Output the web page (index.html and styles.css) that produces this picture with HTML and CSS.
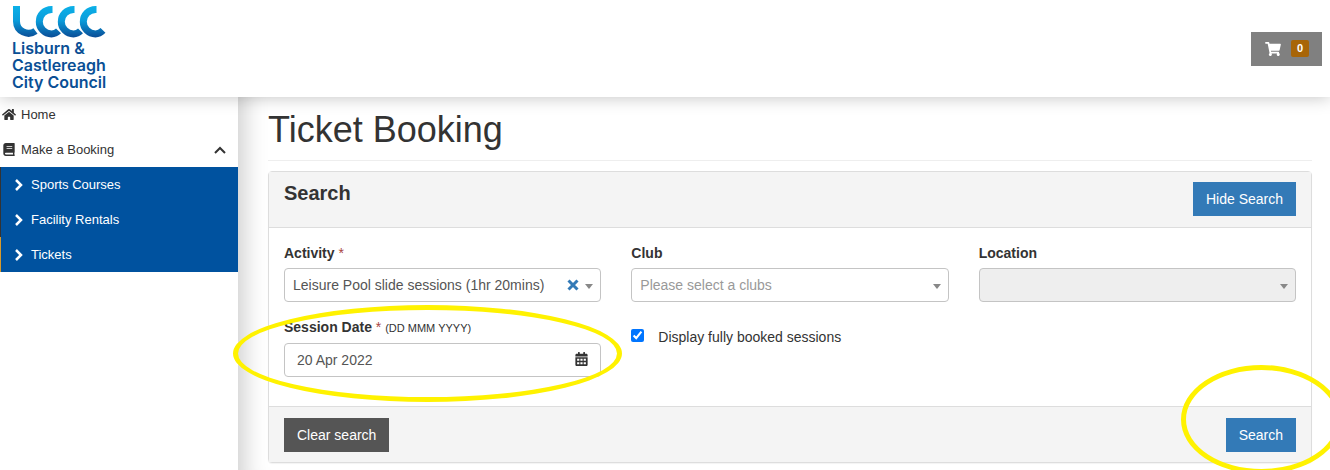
FILE: index.html
```html
<!DOCTYPE html>
<html lang="en">
<head>
    <meta charset="UTF-8">
    <meta name="viewport" content="width=device-width, initial-scale=1.0">
    <title>Ticket Booking</title>
    <link rel="stylesheet" href="styles.css">
</head>
<body>
    <header class="header">
        <a href="#" class="logo">
            <svg class="logo-mark" viewBox="0 0 94 32" aria-hidden="true">
                <defs>
                    <linearGradient id="logoBlue" gradientUnits="userSpaceOnUse" x1="0" y1="0" x2="0" y2="32">
                        <stop offset="0" stop-color="#0bb0e8"/>
                        <stop offset="0.45" stop-color="#0a9ddb"/>
                        <stop offset="1" stop-color="#0a4a94"/>
                    </linearGradient>
                </defs>
                <g fill="none" stroke="url(#logoBlue)" stroke-width="7">
                    <path d="M4.500 0v15.500a12 12 0 0 0 19 9.500"/>
                    <path d="M40.500 3.500h-1a12.200 12.200 0 0 0 0 24.400q4 0 7-3"/>
                    <path d="M62.500 3.500h-1a12.200 12.200 0 0 0 0 24.400q4 0 7-3"/>
                    <path d="M84.500 3.500h-1a12.200 12.200 0 0 0 0 24.400q4 0 7.500-3.500"/>
                </g>
            </svg>
            <span class="logo-text">Lisburn &amp;<br>Castlereagh<br>City Council</span>
        </a>
        <button type="button" class="cart" aria-label="Basket">
            <svg class="icon cart-icon" viewBox="0 0 576 512"><path d="M528.12 301.319l47.273-208C578.806 78.301 567.391 64 551.99 64H159.208l-9.166-44.81C147.758 8.021 137.93 0 126.529 0H24C10.745 0 0 10.745 0 24v16c0 13.255 10.745 24 24 24h69.883l70.248 343.435C147.325 417.1 136 435.222 136 456c0 30.928 25.072 56 56 56s56-25.072 56-56c0-15.674-6.447-29.835-16.824-40h209.647C430.447 426.165 424 440.326 424 456c0 30.928 25.072 56 56 56s56-25.072 56-56c0-22.172-12.888-41.332-31.579-50.405l5.517-24.276c3.413-15.018-8.002-29.319-23.403-29.319H218.117l-6.545-32h293.145c11.206 0 20.92-7.754 23.403-18.681z"/></svg>
            <span class="badge">0</span>
        </button>
    </header>

    <div class="page">
        <nav class="sidebar">
            <a href="#" class="nav-link">
                <svg class="icon nav-icon" viewBox="0 0 576 512"><path d="M280.37 148.26L96 300.11V464a16 16 0 0 0 16 16l112.06-.29a16 16 0 0 0 15.92-16V368a16 16 0 0 1 16-16h64a16 16 0 0 1 16 16v95.64a16 16 0 0 0 16 16.05L464 480a16 16 0 0 0 16-16V300L295.67 148.26a12.19 12.19 0 0 0-15.3 0zM571.6 251.47L488 182.56V44.05a12 12 0 0 0-12-12h-56a12 12 0 0 0-12 12v72.61L318.47 43a48 48 0 0 0-61 0L4.34 251.47a12 12 0 0 0-1.6 16.9l25.5 31A12 12 0 0 0 45.15 301l235.22-193.74a12.19 12.19 0 0 1 15.3 0L530.9 301a12 12 0 0 0 16.9-1.6l25.5-31a12 12 0 0 0-1.7-16.93z"/></svg>
                <span>Home</span>
            </a>
            <a href="#" class="nav-link">
                <svg class="icon nav-icon" viewBox="0 0 448 512"><path d="M448 360V24c0-13.3-10.7-24-24-24H96C43 0 0 43 0 96v320c0 53 43 96 96 96h328c13.3 0 24-10.7 24-24v-16c0-7.5-3.5-14.3-8.9-18.7-4.2-15.4-4.2-59.3 0-74.7 5.4-4.3 8.9-11.1 8.9-18.6zM128 134c0-3.3 2.7-6 6-6h212c3.3 0 6 2.7 6 6v20c0 3.3-2.7 6-6 6H134c-3.3 0-6-2.7-6-6v-20zm0 64c0-3.3 2.7-6 6-6h212c3.3 0 6 2.7 6 6v20c0 3.3-2.7 6-6 6H134c-3.3 0-6-2.7-6-6v-20zm253.4 250H96c-17.7 0-32-14.3-32-32 0-17.6 14.4-32 32-32h285.4c-1.9 17.1-1.9 46.9 0 64z"/></svg>
                <span>Make a Booking</span>
                <svg class="nav-toggle" viewBox="0 0 12 8"><path d="M1 7l5-5 5 5"/></svg>
            </a>
            <div class="subnav">
                <a href="#" class="subnav-link"><svg class="chevron" viewBox="0 0 8 12"><path d="M1 1l5 5-5 5"/></svg>Sports Courses</a>
                <a href="#" class="subnav-link"><svg class="chevron" viewBox="0 0 8 12"><path d="M1 1l5 5-5 5"/></svg>Facility Rentals</a>
                <a href="#" class="subnav-link active"><svg class="chevron" viewBox="0 0 8 12"><path d="M1 1l5 5-5 5"/></svg>Tickets</a>
            </div>
        </nav>

        <main class="content">
            <h1>Ticket Booking</h1>
            <form class="panel">
                <div class="panel-heading">
                    <h2>Search</h2>
                    <button type="button" class="btn btn-primary">Hide Search</button>
                </div>
                <div class="panel-body">
                    <div class="field">
                        <label for="activity">Activity <span class="required">*</span></label>
                        <div class="select-box">
                            <select id="activity">
                                <option>Leisure Pool slide sessions (1hr 20mins)</option>
                            </select>
                            <button type="button" class="clear" aria-label="Clear activity">
                                <svg viewBox="0 0 12 12"><path d="M1.500 1.500l9 9M10.500 1.500l-9 9"/></svg>
                            </button>
                        </div>
                    </div>
                    <div class="field">
                        <label for="club">Club</label>
                        <div class="select-box">
                            <select id="club" class="placeholder">
                                <option>Please select a clubs</option>
                            </select>
                        </div>
                    </div>
                    <div class="field">
                        <label for="location">Location</label>
                        <div class="select-box">
                            <select id="location" disabled></select>
                        </div>
                    </div>
                    <div class="field marked">
                        <label for="date">Session Date <span class="required">*</span> <small>(DD MMM YYYY)</small></label>
                        <div class="date-box">
                            <input type="text" id="date" value="20 Apr 2022">
                            <svg class="icon date-icon" viewBox="0 0 448 512"><path fill-rule="evenodd" d="M0 464c0 26.500 21.500 48 48 48h352c26.500 0 48-21.500 48-48V192H0zM64 244h80v76H64zM184 244h80v76h-80zM304 244h80v76h-80zM64 372h80v76H64zM184 372h80v76h-80zM304 372h80v76h-80zM400 64h-48V16c0-8.800-7.200-16-16-16h-32c-8.800 0-16 7.200-16 16v48H160V16c0-8.800-7.200-16-16-16h-32c-8.800 0-16 7.200-16 16v48H48C21.500 64 0 85.500 0 112v48h448v-48c0-26.500-21.500-48-48-48z"/></svg>
                        </div>
                        <span class="ring ring-date"></span>
                    </div>
                    <div class="check">
                        <input type="checkbox" id="booked" checked>
                        <label for="booked">Display fully booked sessions</label>
                    </div>
                </div>
                <div class="panel-footer">
                    <button type="reset" class="btn btn-dark">Clear search</button>
                    <div class="marked">
                        <button type="button" class="btn btn-primary">Search</button>
                        <span class="ring ring-search"></span>
                    </div>
                </div>
            </form>
        </main>
    </div>
</body>
</html>
```

FILE: styles.css
```css
* {
    box-sizing: border-box;
}
body {
    display: flex;
    flex-direction: column;
    min-height: 100vh;
    margin: 0;
    overflow: hidden;
    font-family: "Liberation Sans", Arial, sans-serif;
    font-size: 14px;
    line-height: 20px;
    color: #333;
    background-color: #fff;
}
a {
    color: inherit;
    text-decoration: none;
}
button,
input,
select {
    font: inherit;
}
.icon {
    display: block;
    fill: currentColor;
}

/* header */
.header {
    position: relative;
    z-index: 1;
    display: flex;
    align-items: center;
    justify-content: space-between;
    height: 97px;
    padding: 0 8px 0 12px;
    background-color: #fff;
    box-shadow: 0 0 16px rgba(0,0,0,0.25);
}
.logo {
    padding-bottom: 1px;
    color: #0a4f95;
}
.logo-mark {
    display: block;
    width: 94px;
    height: 32px;
    margin-bottom: 2px;
}
.logo-text {
    display: block;
    font-family: Inter, sans-serif;
    font-size: 16px;
    font-weight: 600;
    line-height: 17px;
    white-space: nowrap;
}
.cart {
    display: flex;
    align-items: center;
    gap: 10px;
    height: 34px;
    padding: 0 13px 0 14px;
    border: none;
    color: #fff;
    background-color: #808080;
    cursor: pointer;
}
.cart-icon {
    width: 16px;
    height: 14px;
}
.badge {
    width: 18px;
    border-radius: 2px;
    font-size: 11px;
    font-weight: 700;
    line-height: 17px;
    text-align: center;
    background-color: #a86508;
}

/* sidebar */
.page {
    display: flex;
    flex: 1;
}
.sidebar {
    flex: none;
    width: 238px;
}
.nav-link {
    display: flex;
    align-items: center;
    gap: 5px;
    height: 35px;
    padding: 0 12px 0 2px;
    font-size: 13px;
}
.nav-icon {
    width: 14px;
    height: 13px;
}
.nav-toggle {
    width: 12px;
    height: 8px;
    margin-left: auto;
    fill: none;
    stroke: #333;
    stroke-width: 2;
}
.subnav-link {
    display: flex;
    align-items: center;
    gap: 8px;
    height: 35px;
    padding-left: 14px;
    border-left: 1px solid #333;
    font-size: 13px;
    color: #fff;
    background-color: #00529f;
}
.subnav-link.active {
    border-left-color: #d99a2b;
}
.chevron {
    width: 8px;
    height: 12px;
    fill: none;
    stroke: #fff;
    stroke-width: 2.5;
}

/* content */
.content {
    flex: 1;
    padding: 13px 18px 7px 30px;
    box-shadow: inset 30px 0 24px -24px rgba(0,0,0,0.2);
}
h1 {
    margin: 0 0 10px;
    padding-bottom: 10px;
    border-bottom: 1px solid #eee;
    font-size: 36px;
    font-weight: 400;
    line-height: 40px;
}
.panel {
    border: 1px solid #ddd;
    border-radius: 4px;
    background-color: #fff;
    box-shadow: 0 1px 1px rgba(0,0,0,0.05);
}
.panel-heading,
.panel-footer {
    display: flex;
    justify-content: space-between;
    padding: 10px 15px;
    background-color: #f4f4f4;
}
.panel-heading {
    padding-bottom: 11px;
    border-bottom: 1px solid #ddd;
}
.panel-footer {
    padding-top: 11px;
    border-top: 1px solid #ddd;
}
h2 {
    margin: 0;
    font-size: 20px;
    line-height: 22px;
}
.btn {
    display: block;
    height: 34px;
    padding: 0 13px;
    border: none;
    color: #fff;
    cursor: pointer;
}
.btn-primary {
    background-color: #337ab7;
}
.btn-dark {
    background-color: #555;
}
.panel-body {
    display: grid;
    grid-template-columns: repeat(3, minmax(0, 1fr));
    gap: 15px 30px;
    padding: 15px 15px 29px;
}
.field label {
    display: block;
    margin-bottom: 5px;
    font-weight: 700;
}
.required {
    font-weight: 400;
    color: #a94442;
}
small {
    font-size: 11px;
    font-weight: 400;
}
.select-box,
.date-box {
    position: relative;
}
.select-box::after {
    content: "";
    position: absolute;
    top: 16px;
    right: 8px;
    border: 4px solid transparent;
    border-top: 5px solid #888;
    border-bottom: none;
    pointer-events: none;
}
select,
.date-box input {
    display: block;
    width: 100%;
    height: 34px;
    padding: 0 40px 0 8px;
    border: 1px solid #c4c4c4;
    border-radius: 4px;
    color: #555;
    background-color: #fff;
    appearance: none;
}
select.placeholder {
    color: #999;
}
select:disabled {
    background-color: #eee;
    opacity: 1;
}
.date-box input {
    padding-left: 12px;
}
.date-icon {
    position: absolute;
    top: 9px;
    right: 13px;
    width: 13px;
    height: 14px;
}
.clear {
    position: absolute;
    top: 11px;
    right: 22px;
    padding: 0;
    border: none;
    background: none;
    cursor: pointer;
}
.clear svg {
    display: block;
    width: 12px;
    height: 12px;
    stroke: #337ab7;
    stroke-width: 3;
}
.check {
    display: flex;
    align-items: flex-start;
    gap: 14px;
    padding-top: 10px;
}
.check input {
    width: 13px;
    height: 13px;
    margin: 2px 0 0;
    accent-color: #0075ff;
}

/* highlighter rings drawn over the form */
.marked {
    position: relative;
}
.ring {
    position: absolute;
    z-index: 2;
    border: 5px solid #fff200;
    border-radius: 50%;
    pointer-events: none;
}
.ring-date {
    top: -12px;
    left: -51px;
    right: -21px;
    height: 97px;
}
.ring-search {
    top: -53px;
    left: -45px;
    right: -46px;
    height: 109px;
}
```
